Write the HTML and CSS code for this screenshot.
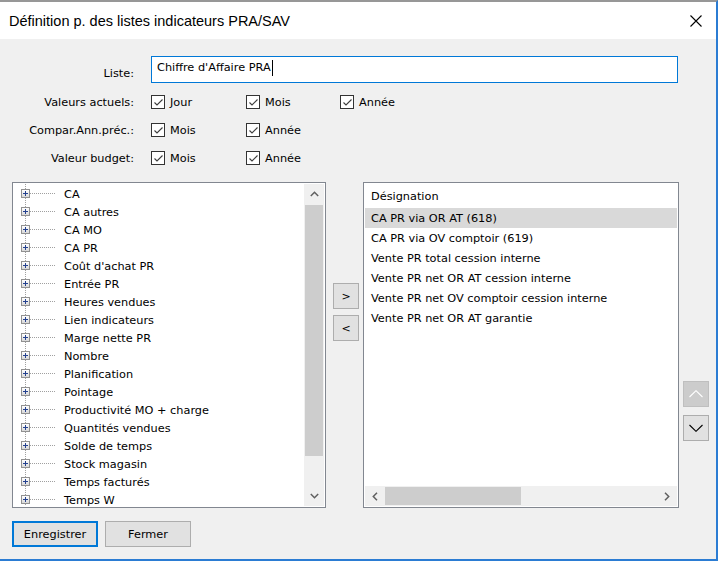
FILE: index.html
```html
<!DOCTYPE html>
<html lang="fr">
<head>
<meta charset="utf-8">
<title>Définition p. des listes indicateurs PRA/SAV</title>
<link rel="stylesheet" href="styles.css">
</head>
<body>
<div class="window">
  <div class="titlebar">
    <span class="title">Définition p. des listes indicateurs PRA/SAV</span>
    <svg class="close" width="12" height="12" viewBox="0 0 12 12"><path d="M0.5 0.5L11.5 11.5M11.5 0.5L0.5 11.5" stroke="#000" stroke-width="1.1" fill="none"/></svg>
  </div>
  <div class="content">
    <div class="form">
      <div class="lbl lbl-liste">Liste:</div>
      <div class="textbox">Chiffre d'Affaire PRA<span class="caret"></span></div>

      <div class="lbl">Valeurs actuels:</div>
      <div class="checks">
        <span class="chk"><span class="box"><svg width="11" height="11" viewBox="0 0 11 11"><path d="M1.5 5.5L4 8L9.5 2.5" stroke="#3c3c3c" stroke-width="1.1" fill="none"/></svg></span><span class="ctext">Jour</span></span>
        <span class="chk"><span class="box"><svg width="11" height="11" viewBox="0 0 11 11"><path d="M1.5 5.5L4 8L9.5 2.5" stroke="#3c3c3c" stroke-width="1.1" fill="none"/></svg></span><span class="ctext">Mois</span></span>
        <span class="chk"><span class="box"><svg width="11" height="11" viewBox="0 0 11 11"><path d="M1.5 5.5L4 8L9.5 2.5" stroke="#3c3c3c" stroke-width="1.1" fill="none"/></svg></span><span class="ctext">Année</span></span>
      </div>

      <div class="lbl">Compar.Ann.préc.:</div>
      <div class="checks">
        <span class="chk"><span class="box"><svg width="11" height="11" viewBox="0 0 11 11"><path d="M1.5 5.5L4 8L9.5 2.5" stroke="#3c3c3c" stroke-width="1.1" fill="none"/></svg></span><span class="ctext">Mois</span></span>
        <span class="chk"><span class="box"><svg width="11" height="11" viewBox="0 0 11 11"><path d="M1.5 5.5L4 8L9.5 2.5" stroke="#3c3c3c" stroke-width="1.1" fill="none"/></svg></span><span class="ctext">Année</span></span>
      </div>

      <div class="lbl">Valeur budget:</div>
      <div class="checks">
        <span class="chk"><span class="box"><svg width="11" height="11" viewBox="0 0 11 11"><path d="M1.5 5.5L4 8L9.5 2.5" stroke="#3c3c3c" stroke-width="1.1" fill="none"/></svg></span><span class="ctext">Mois</span></span>
        <span class="chk"><span class="box"><svg width="11" height="11" viewBox="0 0 11 11"><path d="M1.5 5.5L4 8L9.5 2.5" stroke="#3c3c3c" stroke-width="1.1" fill="none"/></svg></span><span class="ctext">Année</span></span>
      </div>
    </div>

    <div class="lists">
      <div class="tree">
        <div class="tree-items">
          <div class="node"><span class="exp"></span><span class="ntext">CA</span></div>
          <div class="node"><span class="exp"></span><span class="ntext">CA autres</span></div>
          <div class="node"><span class="exp"></span><span class="ntext">CA MO</span></div>
          <div class="node"><span class="exp"></span><span class="ntext">CA PR</span></div>
          <div class="node"><span class="exp"></span><span class="ntext">Coût d'achat PR</span></div>
          <div class="node"><span class="exp"></span><span class="ntext">Entrée PR</span></div>
          <div class="node"><span class="exp"></span><span class="ntext">Heures vendues</span></div>
          <div class="node"><span class="exp"></span><span class="ntext">Lien indicateurs</span></div>
          <div class="node"><span class="exp"></span><span class="ntext">Marge nette PR</span></div>
          <div class="node"><span class="exp"></span><span class="ntext">Nombre</span></div>
          <div class="node"><span class="exp"></span><span class="ntext">Planification</span></div>
          <div class="node"><span class="exp"></span><span class="ntext">Pointage</span></div>
          <div class="node"><span class="exp"></span><span class="ntext">Productivité MO + charge</span></div>
          <div class="node"><span class="exp"></span><span class="ntext">Quantités vendues</span></div>
          <div class="node"><span class="exp"></span><span class="ntext">Solde de temps</span></div>
          <div class="node"><span class="exp"></span><span class="ntext">Stock magasin</span></div>
          <div class="node"><span class="exp"></span><span class="ntext">Temps facturés</span></div>
          <div class="node"><span class="exp"></span><span class="ntext">Temps W</span></div>
        </div>
        <div class="vscroll">
          <div class="sb-btn"><svg width="9" height="6" viewBox="0 0 9 6"><path d="M0.8 5L4.5 1.3L8.2 5" stroke="#606060" stroke-width="1.5" fill="none"/></svg></div>
          <div class="sb-thumb-v"></div>
          <div class="sb-fill"></div>
          <div class="sb-btn"><svg width="9" height="6" viewBox="0 0 9 6"><path d="M0.8 1L4.5 4.7L8.2 1" stroke="#606060" stroke-width="1.5" fill="none"/></svg></div>
        </div>
      </div>

      <div class="move">
        <button class="btn-small">&gt;</button>
        <button class="btn-small">&lt;</button>
      </div>

      <div class="list">
        <div class="list-items">
          <div class="hdr">Désignation</div>
          <div class="row sel">CA PR via OR AT (618)</div>
          <div class="row">CA PR via OV comptoir (619)</div>
          <div class="row">Vente PR total cession interne</div>
          <div class="row">Vente PR net OR AT cession interne</div>
          <div class="row">Vente PR net OV comptoir cession interne</div>
          <div class="row">Vente PR net OR AT garantie</div>
        </div>
        <div class="hscroll">
          <div class="sb-btn-h"><svg width="6" height="9" viewBox="0 0 6 9"><path d="M5 0.8L1.3 4.5L5 8.2" stroke="#606060" stroke-width="1.5" fill="none"/></svg></div>
          <div class="sb-thumb-h"></div>
          <div class="sb-fill"></div>
          <div class="sb-btn-h"><svg width="6" height="9" viewBox="0 0 6 9"><path d="M1 0.8L4.7 4.5L1 8.2" stroke="#606060" stroke-width="1.5" fill="none"/></svg></div>
        </div>
      </div>

      <div class="order">
        <button class="btn-small disabled"><svg width="14" height="8" viewBox="0 0 14 8"><path d="M0.5 7L7 0.7L13.5 7" stroke="#ffffff" stroke-width="1.1" fill="none"/></svg></button>
        <button class="btn-small"><svg width="14" height="8" viewBox="0 0 14 8"><path d="M0.5 1L7 7.3L13.5 1" stroke="#000000" stroke-width="1.1" fill="none"/></svg></button>
      </div>
    </div>

    <div class="footer">
      <button class="btn default">Enregistrer</button>
      <button class="btn">Fermer</button>
    </div>
  </div>
</div>
</body>
</html>
```

FILE: styles.css
```css
html, body {
  margin: 0;
  padding: 0;
}

body {
  width: 718px;
  height: 561px;
  overflow: hidden;
  background: #f0f0f0;
  font-family: "DejaVu Sans", "Liberation Sans", sans-serif;
  font-size: 11.3px;
  color: #000;
}

.window {
  box-sizing: border-box;
  width: 718px;
  height: 561px;
  border-top: 2px solid #979797;
  border-right: 2px solid #2b7cd3;
  border-bottom: 2px solid #2b7cd3;
  background: #f0f0f0;
  display: flex;
  flex-direction: column;
}

.titlebar {
  height: 37px;
  background: #fff;
  display: flex;
  align-items: center;
  justify-content: space-between;
  padding: 0 14px 0 9px;
  flex-shrink: 0;
}

.title {
  font-family: "Liberation Sans", "Noto Sans", sans-serif;
  font-size: 14.5px;
  color: #000;
  padding-top: 1px;
}

.close {
  display: block;
}

.content {
  flex: 1;
  display: flex;
  flex-direction: column;
}

/* ---------- form ---------- */
.form {
  display: grid;
  grid-template-columns: 122px 527px;
  grid-template-rows: 32px 28px 28px 28px;
  column-gap: 17px;
  padding: 17px 0 0 12px;
  align-items: center;
}

.lbl {
  text-align: right;
  line-height: 14px;
  padding-top: 2px;
  white-space: nowrap;
}

.lbl-liste {
  align-self: start;
  padding-top: 11px;
}

.textbox {
  align-self: start;
  box-sizing: border-box;
  height: 27px;
  border: 1px solid #0078d7;
  background: #fff;
  padding: 0 5px 3px;
  line-height: 18px;
  display: flex;
  align-items: center;
}

.caret {
  display: inline-block;
  width: 1px;
  height: 16px;
  background: #000;
  margin-left: 1px;
}

.checks {
  display: grid;
  grid-template-columns: 95px 94px auto;
  align-items: center;
}

.chk {
  display: flex;
  align-items: center;
}

.ctext {
  line-height: 14px;
  padding-top: 2px;
}

.box {
  box-sizing: border-box;
  width: 14px;
  height: 14px;
  border: 1px solid #333;
  background: #fff;
  margin-right: 5px;
  display: flex;
  align-items: center;
  justify-content: center;
}

.box svg {
  display: block;
}

/* ---------- lists ---------- */
.lists {
  display: flex;
  height: 326px;
  margin-top: 10px;
  padding-left: 12px;
}

.tree,
.list {
  box-sizing: border-box;
  height: 326px;
  border: 1px solid #828790;
  background: #fff;
  padding: 1px;
  overflow: hidden;
}

.tree {
  width: 314px;
  display: flex;
}

.tree-items {
  flex: 1;
  overflow: hidden;
}

.node {
  height: 18px;
  display: flex;
  align-items: center;
  white-space: nowrap;
  background:
    repeating-linear-gradient(to bottom, #a0a0a0 0 1px, transparent 1px 2px) 11px 0 / 1px 100% no-repeat,
    repeating-linear-gradient(to right, #a0a0a0 0 1px, transparent 1px 2px) 16px 9px / 26px 1px no-repeat;
}

.ntext {
  line-height: 14px;
  padding-top: 4px;
}

.exp {
  box-sizing: border-box;
  width: 9px;
  height: 9px;
  margin: 0 34px 0 7px;
  border: 1px solid #919191;
  background:
    linear-gradient(#24418f, #24418f) center / 5px 1px no-repeat,
    linear-gradient(#24418f, #24418f) center / 1px 5px no-repeat,
    linear-gradient(#ffffff, #d8d8d8);
  flex-shrink: 0;
}

.vscroll {
  width: 20px;
  background: #f0f0f0;
  display: flex;
  flex-direction: column;
}

.sb-btn {
  height: 20px;
  display: flex;
  align-items: center;
  justify-content: center;
  flex-shrink: 0;
}

.sb-thumb-v {
  height: 251px;
  margin: 1px 1px 0;
  background: #cdcdcd;
}

.sb-fill {
  flex: 1;
}

.move {
  width: 26px;
  margin-left: 7px;
  padding-top: 101px;
  display: flex;
  flex-direction: column;
  gap: 6px;
}

.order {
  width: 26px;
  margin-left: 4px;
  padding-top: 199px;
  display: flex;
  flex-direction: column;
  gap: 8px;
}

.btn-small {
  box-sizing: border-box;
  width: 26px;
  height: 26px;
  padding: 0;
  border: 1px solid #adadad;
  background: #e1e1e1;
  font-family: "DejaVu Sans", sans-serif;
  font-size: 11px;
  color: #000;
  display: flex;
  align-items: center;
  justify-content: center;
}

.btn-small.disabled {
  background: #cccccc;
  border-color: #bfbfbf;
}

.list {
  width: 316px;
  margin-left: 4px;
  display: flex;
  flex-direction: column;
}

.list-items {
  flex: 1;
  overflow: hidden;
}

.hdr {
  height: 24px;
  line-height: 26px;
  padding-left: 6px;
}

.row {
  box-sizing: border-box;
  height: 20px;
  line-height: 18px;
  padding: 2px 0 0 6px;
  white-space: nowrap;
}

.row.sel {
  background: #d9d9d9;
}

.hscroll {
  height: 20px;
  background: #f0f0f0;
  display: flex;
  flex-shrink: 0;
}

.sb-btn-h {
  width: 20px;
  display: flex;
  align-items: center;
  justify-content: center;
  flex-shrink: 0;
}

.sb-thumb-h {
  width: 136px;
  margin: 1px 0;
  background: #cdcdcd;
}

/* ---------- footer ---------- */
.footer {
  display: flex;
  gap: 7px;
  padding-left: 12px;
  margin-top: 13px;
}

.btn {
  box-sizing: border-box;
  width: 86px;
  height: 26px;
  padding: 0;
  border: 1px solid #adadad;
  background: #e1e1e1;
  font-family: "DejaVu Sans", sans-serif;
  font-size: 11.3px;
  color: #000;
}

.btn.default {
  border: 2px solid #0078d7;
}
```
